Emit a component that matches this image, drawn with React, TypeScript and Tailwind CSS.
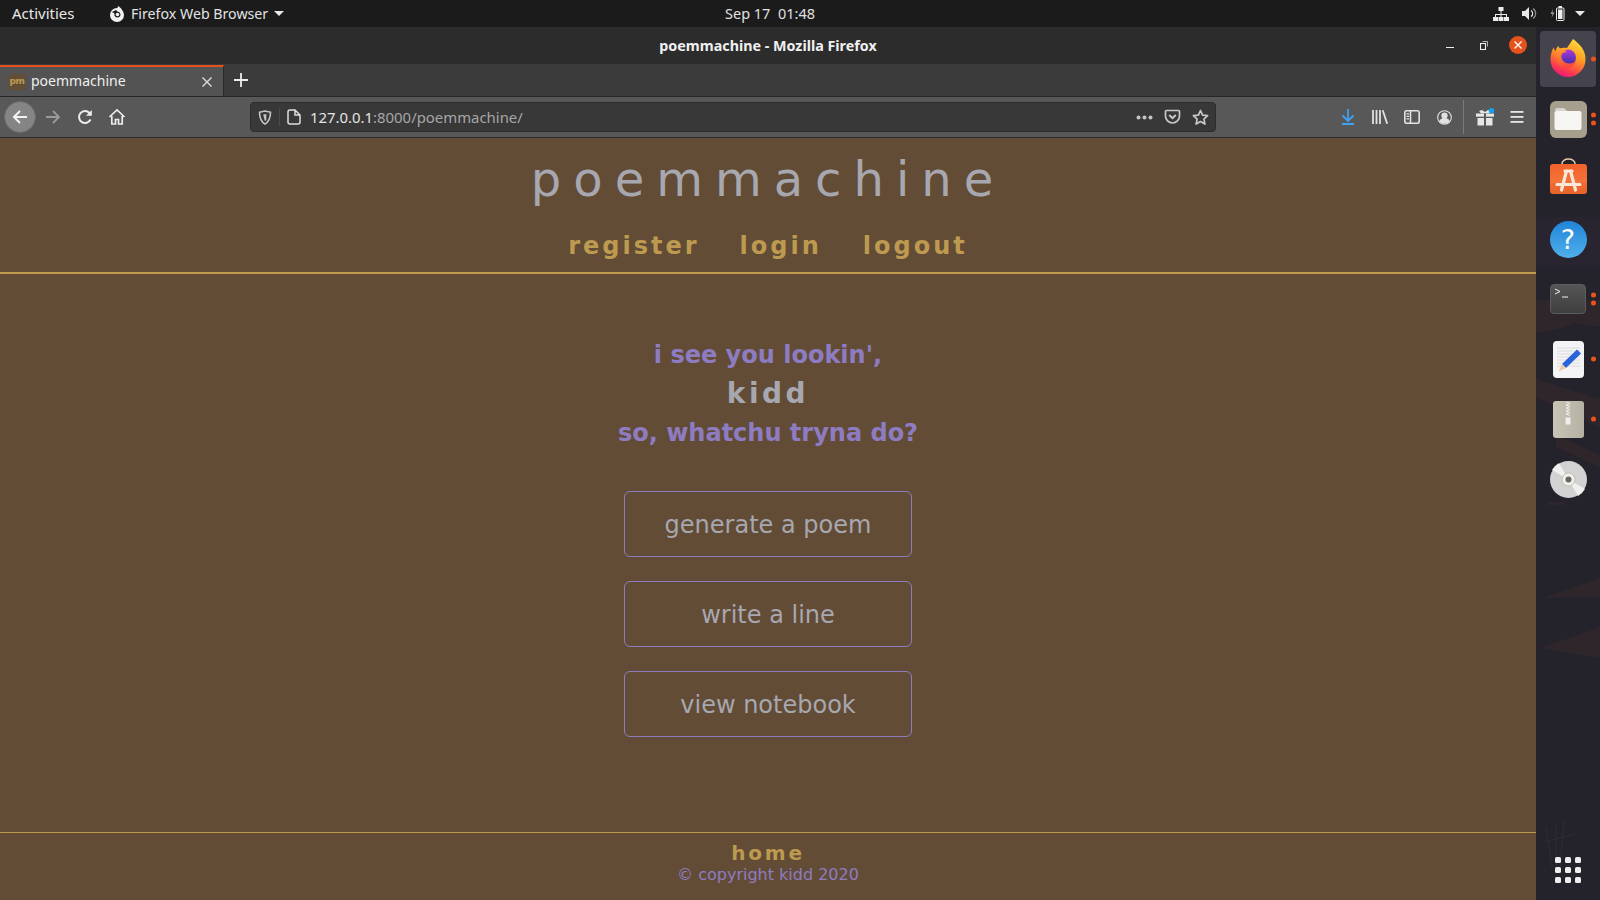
import React from "react";

const UI = "font-['Noto_Sans',sans-serif]";
const PAGE = "font-['DejaVu_Sans',sans-serif]";

function Back() {
  return (
    <svg width="18" height="18" viewBox="0 0 18 18" fill="none" stroke="#f3f3f3" strokeWidth="2">
      <path d="M16 9H3M9 3L3 9l6 6" />
    </svg>
  );
}
function Forward() {
  return (
    <svg width="18" height="18" viewBox="0 0 18 18" fill="none" stroke="#9a9a9a" strokeWidth="1.8">
      <path d="M2 9h13M9 3l6 6-6 6" />
    </svg>
  );
}
function Reload() {
  return (
    <svg width="18" height="18" viewBox="0 0 18 18" fill="none" stroke="#ececec" strokeWidth="2">
      <path d="M14.5 11.5A6 6 0 1 1 13.5 5L15 6.5" />
      <path d="M15.8 2v5.8H10" fill="#ececec" stroke="none" />
    </svg>
  );
}
function Home() {
  return (
    <svg width="18" height="18" viewBox="0 0 18 18" fill="none" stroke="#ececec" strokeWidth="1.7">
      <path d="M1.5 9L9 2l7.5 7" />
      <path d="M3.8 8v8h3.7v-4.5h3V16h3.7V8" />
    </svg>
  );
}
function Shield() {
  return (
    <svg width="14" height="15" viewBox="0 0 14 15" fill="none" stroke="#c4c4c4" strokeWidth="1.6">
      <path d="M1.5 2.3C4 1.6 5.5 1.2 7 1c1.5.2 3 .6 5.5 1.3 0 5.5-1.5 9.5-5.5 11.7C3 11.8 1.5 7.800 1.500 2.300z" />
      <path d="M5.200 4.500L8.300 4v6.200L6.800 11z" fill="#c4c4c4" stroke="none" />
    </svg>
  );
}
function PageIcon() {
  return (
    <svg width="14" height="16" viewBox="0 0 14 16" fill="none" stroke="#dedede" strokeWidth="1.5">
      <path d="M3 1h5l5 5v7a2 2 0 0 1-2 2H3a2 2 0 0 1-2-2V3a2 2 0 0 1 2-2zM8 1v5h5" />
    </svg>
  );
}
function Pocket() {
  return (
    <svg width="17" height="16" viewBox="0 0 17 16" fill="none" stroke="#c9c9c9" strokeWidth="1.7">
      <path d="M2.500 1.500h12a1 1 0 0 1 1 1V7a7 7 0 0 1-14 0V2.500a1 1 0 0 1 1-1z" />
      <path d="M5.200 6l3.300 3.200L11.800 6" strokeWidth="2" />
    </svg>
  );
}
function Star() {
  return (
    <svg width="17" height="17" viewBox="0 0 17 17" fill="none" stroke="#c9c9c9" strokeWidth="1.7" strokeLinejoin="round">
      <path d="M8.500 1.500l2.100 4.600 5 .6-3.700 3.400 1 5-4.400-2.500-4.400 2.500 1-5L1.400 6.700l5-.6z" />
    </svg>
  );
}
function Download() {
  return (
    <svg width="14" height="16" viewBox="0 0 14 16" fill="none" stroke="#3fa0f5" strokeWidth="1.8">
      <path d="M7 0v11.500M1.500 6.500L7 12l5.500-5.500M1 15h12" />
    </svg>
  );
}
function Library() {
  return (
    <svg width="16" height="14" viewBox="0 0 16 14" fill="none" stroke="#e2e2e2" strokeWidth="1.8">
      <path d="M1 0v14M4.500 0v14M8 0v14M10.700 .3l4.500 13.500" />
    </svg>
  );
}
function Sidebar() {
  return (
    <svg width="16" height="14" viewBox="0 0 16 14" fill="none" stroke="#e2e2e2" strokeWidth="1.6">
      <rect x=".8" y=".8" width="14.400" height="12.400" rx="2" />
      <path d="M6.500 1v12" />
      <path d="M2.500 3.800h2.500M2.500 6.300h2.500M2.500 8.800h2.500" strokeWidth="1.200" />
    </svg>
  );
}
function Account() {
  return (
    <svg width="15" height="15" viewBox="0 0 15 15" fill="none" stroke="#e2e2e2" strokeWidth="1.100">
      <circle cx="7.500" cy="7.500" r="6.800" />
      <circle cx="7.500" cy="5.600" r="2.600" fill="#e2e2e2" />
      <path d="M2.800 11.300c.8-2 2.700-2.700 4.700-2.700s3.900.7 4.700 2.700c-1.200 1.300-2.900 2-4.700 2s-3.500-.7-4.700-2z" fill="#e2e2e2" />
    </svg>
  );
}
function Gift() {
  return (
    <svg width="20" height="18" viewBox="0 0 20 18" fill="#e6e6e6">
      <path d="M4 3l3-1 3 2 3-2 3 1-2 2.200H6z" />
      <rect x="1" y="5.500" width="8" height="3.200" />
      <rect x="11" y="5.500" width="8" height="3.200" />
      <rect x="2.500" y="10" width="6.500" height="7.500" />
      <rect x="11" y="10" width="6.500" height="7.500" />
      <circle cx="16.500" cy="2.700" r="2.700" fill="#14a0f0" />
    </svg>
  );
}
function Hamburger() {
  return (
    <svg width="14" height="12" viewBox="0 0 14 12" fill="#e6e6e6">
      <rect width="13" height="1.800" x=".5" y="0" />
      <rect width="13" height="1.800" x=".5" y="5" />
      <rect width="13" height="1.800" x=".5" y="10" />
    </svg>
  );
}

function Caret({ color = "#e8e8e8" }: { color?: string }) {
  return (
    <svg width="10" height="5" viewBox="0 0 10 5" fill={color}>
      <path d="M0 0h10L5 5z" />
    </svg>
  );
}

function FirefoxGlyph() {
  return (
    <svg width="16" height="16" viewBox="0 0 16 16">
      <circle cx="8" cy="9" r="7" fill="#f2f2f2" />
      <path d="M2 6.500C4 6 5 7 5.500 8c-.5 2 1 3.500 3 3.500s3-1.500 3-3-1.500-3-3-3L7 4z" fill="#1b1b1b" />
      <circle cx="8.500" cy="8.500" r="1.800" fill="#f2f2f2" />
      <path d="M9 0c2 1 4 3 4.500 5.500L8 4z" fill="#f2f2f2" />
    </svg>
  );
}

function TopBar() {
  return (
    <div className={`${UI} h-[27px] shrink-0 bg-[#1b1b1b] text-[#e8e8e8] text-[15px] flex items-center relative`}>
      <span className="ml-3 w-[97px]">Activities</span>
      <FirefoxGlyph />
      <span className="ml-[6px] text-[#e2e2e2] text-[14.200px]">Firefox Web Browser</span>
      <span className="ml-[6px]">
        <Caret />
      </span>
      <span className="absolute left-[725px] top-[3px] text-[14.500px] text-[#e0e0e0]">Sep 17&nbsp; 01:48</span>
      <div className="ml-auto mr-[15px] flex items-center">
        <svg width="16" height="14" viewBox="0 0 16 14" fill="#ededed">
          <rect x="5.500" y="0" width="5" height="4" />
          <rect x="0" y="10" width="5" height="4" />
          <rect x="5.500" y="10" width="5" height="4" />
          <rect x="11" y="10" width="5" height="4" />
          <path d="M7.500 4h1v3h5.500v3h-1V8H8.500v2h-1V8H3v2H2V7h5.500z" />
        </svg>
        <svg className="ml-[13px]" width="15" height="13" viewBox="0 0 15 13" fill="#e8e8e8">
          <path d="M0 4h3l4-4v13l-4-4H0z" />
          <path d="M9 3.500a3.500 3.500 0 0 1 0 6" fill="none" stroke="#e8e8e8" strokeWidth="1.200" />
          <path d="M11 1.500a6 6 0 0 1 0 10" fill="none" stroke="#8f8f8f" strokeWidth="1.200" />
        </svg>
        <svg className="ml-[13px]" width="15" height="15" viewBox="0 0 15 15" fill="none">
          <path d="M3 3L0.500 8h2L1.500 12 4.500 6.500h-2z" fill="#9a9a9a" />
          <rect x="6.500" y="2" width="7.500" height="12.500" rx="1" stroke="#ededed" />
          <rect x="8" y="3.500" width="4.500" height="9.500" fill="#ededed" />
          <rect x="8.500" y="0" width="3.500" height="2" fill="#ededed" />
        </svg>
        <span className="ml-[10px]">
          <Caret />
        </span>
      </div>
    </div>
  );
}

function TitleBar() {
  return (
    <div className={`${UI} h-[37px] shrink-0 bg-[#2c2c2c] flex items-center relative`}>
      <span className="flex-1 text-center text-[#f0f0f0] text-[14.300px] font-bold pt-[1px]">poemmachine - Mozilla Firefox</span>
      <div className="absolute right-[9px] top-[9px] flex items-center">
        <div className="w-[8px] h-[1px] bg-[#efefef] mt-[5px] mr-[26px]" />
        <svg className="mr-[21px]" width="8" height="9" viewBox="0 0 8 9" fill="none" stroke="#efefef">
          <rect x=".5" y="2.500" width="5" height="6" strokeWidth="1.100" />
          <path d="M2.500 .5h5v5" strokeWidth=".7" />
        </svg>
        <div className="w-[18px] h-[18px] rounded-full bg-[#e6521c] flex items-center justify-center">
          <svg width="8" height="8" viewBox="0 0 8 8" stroke="#fff" strokeWidth="1.300">
            <path d="M.5 .5l7 7M7.500 .5l-7 7" />
          </svg>
        </div>
      </div>
    </div>
  );
}

function TabBar() {
  return (
    <div className={`${UI} h-[33px] shrink-0 bg-[#3b3b3b] border-b border-[#262626] flex items-stretch`}>
      <div className="w-[224px] border-t-2 border-[#e5501b] bg-[#535353] flex items-center border-r border-r-[#2a2a2a] mt-[1px]">
        <div className="ml-[9px] w-[16px] h-[16px] bg-[#634d35] rounded-[2px] flex items-center justify-center text-[9px] font-bold leading-none text-[#bd9a50] font-['DejaVu_Sans',sans-serif] tracking-[-0.5px]">
          pm
        </div>
        <span className="ml-[6px] text-[#efefef] text-[14px] pb-[2px]">poemmachine</span>
        <svg className="ml-auto mr-[11px]" width="10" height="10" viewBox="0 0 10 10" stroke="#dcdcdc" strokeWidth="1.400">
          <path d="M.5 .5l9 9M9.500 .5l-9 9" />
        </svg>
      </div>
      <div className="ml-[10px] flex items-center">
        <svg width="14" height="14" viewBox="0 0 14 14" stroke="#ededed" strokeWidth="1.800">
          <path d="M7 0v14M0 7h14" />
        </svg>
      </div>
    </div>
  );
}

function ToolBar() {
  return (
    <div className={`${UI} h-[41px] shrink-0 bg-[#585858] border-b border-[#2a2a2a] flex items-center relative`}>
      <div className="ml-[4px] w-[32px] h-[32px] rounded-full bg-[#858585] border border-[#6a6a6a] flex items-center justify-center">
        <Back />
      </div>
      <div className="ml-[8px]"><Forward /></div>
      <div className="ml-[14px]"><Reload /></div>
      <div className="ml-[14px]"><Home /></div>
      <div className="ml-[124px] w-[966px] h-[30px] rounded-[4px] bg-[#383838] border border-[#2c2c2c] flex items-center">
        <div className="ml-[7px]"><Shield /></div>
        <div className="ml-[7px] w-[1px] h-[18px] bg-[#4c4c4c]" />
        <div className="ml-[7px]"><PageIcon /></div>
        <span className="ml-[9px] text-[14.900px] text-[#e4e4e4]">
          127.0.0.1<span className="text-[#a6a6a6]">:8000/poemmachine/</span>
        </span>
        <div className="ml-auto flex items-center mr-[6px]">
          <svg width="17" height="5" viewBox="0 0 17 5" fill="#c4c4c4">
            <circle cx="2.500" cy="2.500" r="2" />
            <circle cx="8.500" cy="2.500" r="2" />
            <circle cx="14.500" cy="2.500" r="2" />
          </svg>
          <div className="ml-[11px]"><Pocket /></div>
          <div className="ml-[11px]"><Star /></div>
        </div>
      </div>
      <div className="ml-auto flex items-center mr-[12px]">
        <Download />
        <div className="ml-[17px]"><Library /></div>
        <div className="ml-[16px]"><Sidebar /></div>
        <div className="ml-[17px]"><Account /></div>
        <div className="ml-[11px] w-[1px] h-[34px] bg-[#7a7a7a]" />
        <div className="ml-[11px]"><Gift /></div>
        <div className="ml-[15px]"><Hamburger /></div>
      </div>
    </div>
  );
}

function PoemPage() {
  const buttons = ["generate a poem", "write a line", "view notebook"];
  return (
    <div className={`${PAGE} flex-1 bg-[#624c36] flex flex-col items-stretch text-center min-h-0`}>
      <header className="h-[136px] shrink-0 border-b-2 border-[#bd9a50] flex flex-col items-center">
        <h1 className="mt-[9px] text-[48px] leading-[64px] tracking-[0.25em] text-[#a7a7b0] font-normal">poemmachine</h1>
        <nav className="mt-[20px] flex text-[24px] leading-[30px] font-bold tracking-[0.125em] text-[#bd9a50]">
          <a className="mx-[20px]">register</a>
          <a className="mx-[20px]">login</a>
          <a className="ml-[21px] mr-[20px]">logout</a>
        </nav>
      </header>
      <main className="flex-1 flex flex-col items-center pt-[62px]">
        <p className="text-[24px] leading-[39px] font-bold text-[#8e7cc3]">i see you lookin',</p>
        <p className="text-[28px] leading-[39px] -mt-px mb-px font-bold tracking-[0.125em] text-[#a7a7b0]">kidd</p>
        <p className="text-[24px] leading-[39px] font-bold text-[#8e7cc3]">so, whatchu tryna do?</p>
        <div className="mt-[38px] flex flex-col gap-[24px]">
          {buttons.map((b) => (
            <button
              key={b}
              className="w-[288px] h-[66px] pt-[2px] rounded-[6px] border border-[#8e7cc3] text-[24px] text-[#a7a7b0] bg-transparent"
            >
              {b}
            </button>
          ))}
        </div>
      </main>
      <footer className="h-[68px] shrink-0 border-t border-[#bd9a50] flex flex-col items-center">
        <a className="mt-[7px] text-[20px] leading-[26px] font-bold tracking-[0.14em] text-[#bd9a50]">home</a>
        <span className="text-[16px] leading-[20px] -mt-[1px] text-[#8e7cc3]">© copyright kidd 2020</span>
      </footer>
    </div>
  );
}

function FirefoxLogo() {
  return (
    <svg className="-translate-y-px" width="36" height="38" viewBox="0 0 36 38">
      <defs>
        <linearGradient id="ff1" x1="0.75" y1="0" x2="0.35" y2="1">
          <stop offset="0" stopColor="#ffe03a" />
          <stop offset=".45" stopColor="#ff9a20" />
          <stop offset=".8" stopColor="#fb3f4c" />
          <stop offset="1" stopColor="#f0157a" />
        </linearGradient>
        <linearGradient id="ff2" x1="0.5" y1="0" x2="0.5" y2="1">
          <stop offset="0" stopColor="#b237d8" />
          <stop offset=".6" stopColor="#6232bd" />
          <stop offset="1" stopColor="#3a2ea5" />
        </linearGradient>
        <linearGradient id="ff3" x1="0.3" y1="0" x2="0.5" y2="1">
          <stop offset="0" stopColor="#ffa82a" />
          <stop offset="1" stopColor="#f9443e" />
        </linearGradient>
      </defs>
      <path d="M23 0C28 4 36 10 35.500 20.500A17.500 17.500 0 0 1 .5 20.500C.5 16 1.500 12 3.500 8.500 4 10 5 11.500 6 12 9 9 13 8 17 9 19 6 21 3 23 0Z" fill="url(#ff1)" />
      <circle cx="18" cy="18.500" r="8" fill="url(#ff2)" />
      <path d="M6 10L8 7 10 9.500C13 9.500 15 11 17 13 14 13 12 14 11.500 16 10.500 20 14 24.500 19 24.500 23 24.500 25 23 26 21 25 26 21 29 17 29 11 29 6.500 24 6.500 19 6.500 16 7 15 8 13 6.500 13 6 12 6 10Z" fill="url(#ff3)" />
    </svg>
  );
}

function FolderIcon() {
  return (
    <div className="w-[37px] h-[37px] rounded-[6px] bg-[#a79f8d] flex items-center justify-center">
      <svg width="28" height="24" viewBox="0 0 28 24">
        <path d="M1 3a2 2 0 0 1 2-2h7l3 3h-12z" fill="#d8d5ce" />
        <rect x="0.500" y="4" width="27" height="19" rx="2" fill="#f6f5f3" />
      </svg>
    </div>
  );
}

function StoreIcon() {
  return (
    <svg className="-translate-y-[3px]" width="37" height="36" viewBox="0 0 37 36">
      <defs>
        <linearGradient id="bag" x1="0" y1="0" x2="0" y2="1">
          <stop offset="0" stopColor="#f3622a" />
          <stop offset=".62" stopColor="#f3743a" />
          <stop offset=".63" stopColor="#ee6a30" />
          <stop offset="1" stopColor="#e9642b" />
        </linearGradient>
      </defs>
      <path d="M12 8V5.500a6.500 4.500 0 0 1 13 0V8" fill="none" stroke="#e8c9a8" strokeWidth="1.500" />
      <rect x="0" y="6" width="37" height="30" rx="3" fill="url(#bag)" />
      <path d="M15 13h7M16.500 13L11.500 32M20.500 13l5 19" fill="none" stroke="#fbe7da" strokeWidth="3.200" strokeLinecap="round" />
      <path d="M7 26.500h23" stroke="#fbe7da" strokeWidth="3" strokeLinecap="round" />
    </svg>
  );
}

function HelpIcon() {
  return (
    <div className="w-[37px] h-[37px] rounded-full bg-gradient-to-b from-[#1f84d8] to-[#4fb0ea] flex items-center justify-center">
      <span className="font-['DejaVu_Sans',sans-serif] text-[27px] leading-none text-white">?</span>
    </div>
  );
}

function TerminalIcon() {
  return (
    <div className="w-[36px] h-[30px] rounded-[4px] bg-gradient-to-b from-[#555555] to-[#3f3f3f] border border-[#5c5c5c] relative">
      <svg className="absolute left-[4px] top-[3px]" width="14" height="10" viewBox="0 0 14 10" fill="none" stroke="#f0f0f0">
        <path d="M0 1l5 2.500L0 6" />
        <path d="M7 9h6" />
      </svg>
    </div>
  );
}

function EditorIcon() {
  return (
    <svg width="31" height="37" viewBox="0 0 31 37">
      <rect width="31" height="37" rx="4" fill="#f4f4f7" />
      <path d="M4 7h23M4 10h23M4 13h23M4 16h23M4 19h23M4 22h23M4 25h23" stroke="#d5d5da" strokeWidth=".8" />
      <path d="M24 8.500l4 4L13 27l-4-4z" fill="#2a62dc" />
      <path d="M9 23l4 4-7.500 3.500z" fill="#efc9a0" />
    </svg>
  );
}

function ZipIcon() {
  return (
    <div className="w-[31px] h-[37px] rounded-[3px] bg-gradient-to-r from-[#c9c5b6] to-[#b5b1a3] flex justify-center">
      <svg width="8" height="24" viewBox="0 0 8 24" stroke="#eeeeea" strokeWidth="1" fill="none">
        <path d="M2 1l4 1.500L2 4l4 1.500L2 7l4 1.500L2 10l4 1.500L2 13l4 1.500" />
        <rect x="2" y="17" width="4" height="6" fill="#eeeeea" />
      </svg>
    </div>
  );
}

function CdIcon() {
  return (
    <svg width="37" height="37" viewBox="0 0 37 37">
      <circle cx="18.500" cy="18.500" r="18.500" fill="#d2d2d2" />
      <path d="M18.500 18.500L2 9A18.500 18.500 0 0 1 9 2z" fill="#f0f0f0" />
      <path d="M18.500 18.500L35 28a18.500 18.500 0 0 1-7 7z" fill="#f0f0f0" />
      <circle cx="18.500" cy="18.500" r="6.500" fill="#f2efe8" stroke="#b0a89a" strokeWidth=".6" />
      <circle cx="18.500" cy="18.500" r="3" fill="#666" />
    </svg>
  );
}

function Pips({ n }: { n: number }) {
  return (
    <div className="absolute right-[0px] top-1/2 -translate-y-1/2 flex flex-col gap-[3px]">
      {Array.from({ length: n }).map((_, i) => (
        <div key={i} className="w-[5px] h-[5px] rounded-full bg-[#e9541c]" />
      ))}
    </div>
  );
}

function DockItem({ children, pips, active }: { children: React.ReactNode; pips: number; active?: boolean }) {
  return (
    <div className={`relative h-[56px] mx-[4px] mb-[4px] flex items-center justify-center rounded-[4px] ${active ? "bg-[#45434e]" : ""}`}>
      {children}
      {pips > 0 && <Pips n={pips} />}
    </div>
  );
}

function Dock() {
  return (
    <aside className="w-[64px] h-full shrink-0 bg-[#24222b] relative overflow-hidden flex flex-col pt-[4px]">
      <svg className="absolute left-0 top-0" width="64" height="873" viewBox="0 0 64 873" fill="#2f262b">
        <path d="M0 190H64V240H0z" fill="#292530" />
        <path d="M0 273H64V300L40 296 20 303 0 306z" />
        <path d="M0 352L64 372V400L0 370z" />
        <path d="M20 408L64 428V440L20 420z" />
        <path d="M12 475h16v3H12z" />
        <path d="M6 571L64 551V570z" />
        <path d="M4 621L64 600V631z" />
        <path d="M10 800l6 40M20 796v50M28 794l-4 50M8 815l30-8" fill="none" stroke="#2b2933" strokeWidth="1.500" />
      </svg>
      <div className="relative flex flex-col">
        <DockItem pips={1} active><FirefoxLogo /></DockItem>
        <DockItem pips={2}><FolderIcon /></DockItem>
        <DockItem pips={0}><StoreIcon /></DockItem>
        <DockItem pips={0}><HelpIcon /></DockItem>
        <DockItem pips={2}><TerminalIcon /></DockItem>
        <DockItem pips={1}><EditorIcon /></DockItem>
        <DockItem pips={1}><ZipIcon /></DockItem>
        <DockItem pips={0}><CdIcon /></DockItem>
      </div>
      <div className="relative mt-auto mb-[17px] mx-auto grid grid-cols-3 gap-[4px]">
        {Array.from({ length: 9 }).map((_, i) => (
          <div key={i} className="w-[6px] h-[6px] rounded-[1.500px] bg-[#eeeeee]" />
        ))}
      </div>
    </aside>
  );
}

export default function App() {
  return (
    <div className="w-[1600px] h-[900px] overflow-hidden flex flex-col bg-[#24222b]">
      <TopBar />
      <div className="flex-1 flex min-h-0">
        <div className="w-[1536px] flex flex-col min-h-0">
          <TitleBar />
          <TabBar />
          <ToolBar />
          <PoemPage />
        </div>
        <Dock />
      </div>
    </div>
  );
}
